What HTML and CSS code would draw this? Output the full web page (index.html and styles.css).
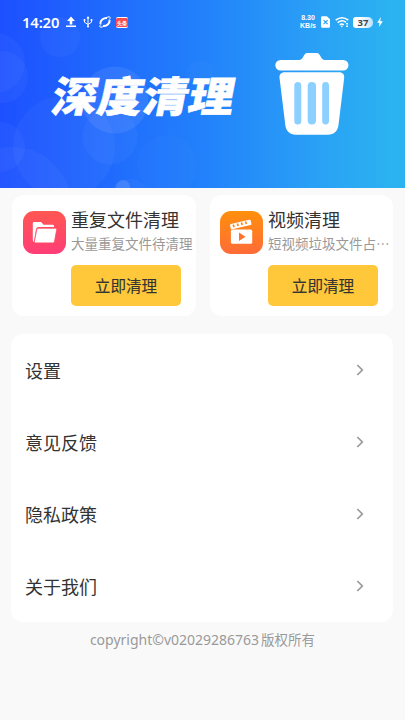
FILE: index.html
```
<!DOCTYPE html>
<html lang="zh-CN">
<head>
<meta charset="utf-8">
<title>深度清理</title>
<link rel="stylesheet" href="styles.css">
</head>
<body>
<header class="hero">
  <svg class="bubbles" viewBox="0 0 405 188" fill="#fff" fill-opacity=".035">
    <circle cx="60" cy="37" r="20"/><circle cx="-5" cy="63" r="30"/><circle cx="2" cy="77" r="26"/>
    <circle cx="0" cy="147" r="25"/><circle cx="64" cy="147" r="51"/><circle cx="12" cy="207" r="60"/>
    <circle cx="115" cy="100" r="33.5" fill-opacity=".08"/><circle cx="110" cy="137" r="27.5"/>
    <circle cx="167" cy="165" r="30" fill-opacity=".015"/><circle cx="200" cy="73" r="13" fill-opacity=".02"/>
    <circle cx="123" cy="187" r="7" fill-opacity=".12"/><circle cx="130" cy="201" r="22"/>
  </svg>
  <div class="status">
    <span class="time">14:20</span>
    <svg class="upload" width="10" height="12" viewBox="0 0 10 12" fill="#fff"><path d="M5 .5 9 5H6.300v3.500H3.700V5H1zM0 9.600h10v1.500H0z"/></svg>
    <svg class="usb" width="10" height="12" viewBox="0 0 10 12" fill="none" stroke="#fff"><path d="M5 1v10M1.500 4v2.200L5 8.500l3.500-2.300V4"/><path d="M5 0 6.500 2.500h-3zM.7 3h1.600v2H.7zM7.700 3h1.600v2H7.700z" fill="#fff" stroke="none"/><circle cx="5" cy="10.500" r="1" fill="#fff" stroke="none"/></svg>
    <svg class="orbit" width="12" height="12" viewBox="0 0 12 12" fill="none" stroke="#fff"><path d="M1.400 7.800C1 4.500 4.500 1.800 8 2M10.600 4.200c.4 3.300-3.100 6-6.600 5.800" stroke-width="2"/><path d="M7.500 1.500c2-.9 3.600-.9 3.700 0 .1.700-.6 1.700-1.600 2.700M4.500 10.500c-2 .9-3.600.9-3.700 0-.1-.7.600-1.700 1.600-2.700" stroke-width="1"/></svg>
    <span class="news">头条</span>
    <span class="speed"><span>8.30</span><span>KB/s</span></span>
    <svg class="sim" width="9" height="12" viewBox="0 0 9 12"><path d="M1.300.3h4.500L9 3.300v7.200a1.200 1.200 0 0 1-1.200 1.200H1.300A1.200 1.200 0 0 1 .1 10.500v-9A1.200 1.200 0 0 1 1.300.3z" fill="#fff"/><path d="m2.600 4.200 4 4m0-4-4 4" stroke="#2b9ff5" stroke-width="1.200"/></svg>
    <svg class="wifi" width="14" height="12" viewBox="0 0 14 12" fill="none" stroke="#fff" stroke-width="1.500"><path d="M.7 4.200q6.300-5 12.600 0M2.700 6.600q4.300-3.400 8.300-.2M4.800 8.900q2.100-1.600 4 0"/><path d="M5.500 9.800h2.600L6.800 11.400zM11.200 7h1.800v1.400h-1.800zM11.200 9.600h1.800V11h-1.800z" fill="#fff" stroke="none"/></svg>
    <span class="battery">37</span>
    <svg class="bolt" width="6" height="10" viewBox="0 0 6 10" fill="#fff"><path d="M3.800 0 .2 5.700h2.300L2 10l3.800-5.800H3.300z"/></svg>
  </div>
  <div class="banner">
    <h1>深度清理</h1>
    <svg class="bin" width="74" height="82" viewBox="0 0 74 82"><path fill="#fff" d="M5.500 7H23c4 0 4.500-2 5.800-4.300C30 .6 30.800 0 32.500 0h9c1.700 0 2.500.6 3.700 2.700C46.500 5 47 7 51 7h17.300a5.200 5.200 0 0 1 0 10.400H5.500A5.200 5.200 0 0 1 5.500 7zM9.500 19.300h54.800c3.300 0 5.200 2.300 4.900 5.500L63.500 72c-.7 6-4.500 9.700-10.500 9.700H20.800c-6 0-9.800-3.700-10.500-9.700L4.500 24.800c-.3-3.200 1.700-5.500 5-5.500z"/><g fill="#8bd0ff"><rect x="19.300" y="29" width="7" height="42.500" rx="3.500"/><rect x="32.700" y="29" width="8.300" height="42.500" rx="4.100"/><rect x="47.200" y="29" width="6.800" height="42.500" rx="3.400"/></g></svg>
  </div>
</header>
<main>
  <section class="cards">
    <article class="card">
      <svg width="43" height="43" viewBox="0 0 43 43"><defs><linearGradient id="red" x2="0" y2="1"><stop stop-color="#ff5752"/><stop offset="1" stop-color="#ff3d77"/></linearGradient></defs><rect width="43" height="43" rx="11" fill="url(#red)"/><path d="M9.800 29V12.200q0-1.300 1.300-1.300h6.200q1 0 1.600.8l1.500 2.100h9.200q1.400 0 1.400 1.400V16H15.500q-2 0-2.400 1.700L11 31q-1.200-.5-1.200-2z" fill="#fff"/><path d="M15.500 17.200h17q1.500 0 1.200 1.400l-2.200 12q-.3 1.300-1.700 1.300H12.200q-1 0-.8-1.300l2.300-12q.3-1.400 1.800-1.400z" fill="#fff" stroke="#ff4b62" stroke-width=".8"/></svg>
      <div class="info"><h2>重复文件清理</h2><p>大量重复文件待清理</p><button>立即清理</button></div>
    </article>
    <article class="card">
      <svg width="43" height="43" viewBox="0 0 43 43"><defs><linearGradient id="orange" x2="0" y2="1"><stop stop-color="#ff900c"/><stop offset="1" stop-color="#ff6b38"/></linearGradient></defs><rect width="43" height="43" rx="11" fill="url(#orange)"/><path d="m11 13 18-4.300q1.500-.3 1.800 1l.6 3.200q.1 1-1 1.200L11 18.500l-.9-3.800Q9.800 13.300 11 13z" fill="#fff"/><path d="m13.200 13.600.9 2.500m3.200-3.600.9 2.500m3.200-3.500.9 2.500m3.200-3.500.9 2.500" stroke="#ff8617" stroke-width="1.700"/><path d="M12.500 18.500h18q1.700 0 1.700 1.700v11q0 1.500-1.700 1.500h-18q-1.600 0-1.600-1.500v-11q0-1.700 1.600-1.700z" fill="#fff"/><path d="m19 21.500 6.500 4.200-6.500 4.200z" fill="#ff742a"/></svg>
      <div class="info"><h2>视频清理</h2><p>短视频垃圾文件占⋯</p><button>立即清理</button></div>
    </article>
  </section>
  <nav class="menu">
    <a><span>设置</span><svg width="8" height="12" viewBox="0 0 8 12"><path d="m1.300 1 5 5-5 5"/></svg></a>
    <a><span>意见反馈</span><svg width="8" height="12" viewBox="0 0 8 12"><path d="m1.300 1 5 5-5 5"/></svg></a>
    <a><span>隐私政策</span><svg width="8" height="12" viewBox="0 0 8 12"><path d="m1.300 1 5 5-5 5"/></svg></a>
    <a><span>关于我们</span><svg width="8" height="12" viewBox="0 0 8 12"><path d="m1.300 1 5 5-5 5"/></svg></a>
  </nav>
</main>
<footer><span class="latin">copyright©v02029286763</span><span>版权所有</span></footer>
</body>
</html>
```
FILE: styles.css
```
* { box-sizing: border-box; margin: 0; }
body { width: 405px; height: 720px; overflow: hidden; background: #f9f9f9; color: #333; font-family: "Noto Sans", "Noto Sans CJK SC", sans-serif; }
.hero { position: relative; height: 188px; overflow: hidden; background: linear-gradient(90deg, #1d50ff, #2281fb 50%, #299ef6 76%, #2bb3f1 97%); color: #fff; }
.bubbles { position: absolute; inset: 0; width: 405px; height: 188px; }
.status { position: relative; display: flex; align-items: center; height: 44px; padding-left: 22px; }
.status svg { flex: none; }
.time { width: 44px; font: 600 14.800px/20px "Noto Sans", sans-serif; letter-spacing: -.15px; }
.usb { margin-left: 7px; }
.orbit { margin-left: 6px; }
.news { width: 12px; height: 11px; margin-left: 5px; border: solid #fff; border-width: 1px 0; border-radius: 2px; background: #fa4c50; font: 700 5px/9px "Noto Sans CJK SC", sans-serif; text-align: center; }
.speed { display: flex; flex-direction: column; width: 20px; margin-left: 170px; font: 700 7px/8px "Liberation Sans", sans-serif; text-align: center; }
.sim { margin-left: 3px; }
.wifi { margin-left: 5px; }
.battery { width: 20px; height: 11px; margin-left: 4px; border-radius: 3px 5px 5px 3px; background: linear-gradient(90deg, #fff 40%, #bce2fd); color: #3d454c; font: 700 9.500px/11px "Noto Sans", sans-serif; text-align: center; }
.bolt { margin-left: 4px; }
.banner { position: relative; display: flex; align-items: flex-start; padding: 9px 0 0 53px; }
h1 { width: 222px; padding-top: 8px; font: 900 45.500px/66px "Noto Sans CJK SC", sans-serif; transform: translateX(1px) skewX(-11deg) scaleY(.92); -webkit-text-stroke: .6px #fff; }
.cards { display: flex; gap: 14px; padding: 7px 12px 0; }
.card { display: flex; width: 184px; height: 121px; padding: 16px 0 0 10.500px; border-radius: 12px; background: #fff; }
.card + .card { padding-left: 9.500px; }
.card > svg { flex: none; margin-right: 5.500px; }
.info { width: 125px; white-space: nowrap; }
h2 { height: 21px; font: 400 18px/16px "Noto Sans CJK SC", sans-serif; }
p { height: 34px; color: #999; font: 400 13.500px/22px "Noto Sans CJK SC", sans-serif; }
button { display: block; width: 110px; height: 41px; margin-top: -1px; padding: 0; border: 0; border-radius: 5px; background: #ffc83b; color: #333; font: 400 15.600px/41px "Noto Sans CJK SC", sans-serif; -webkit-text-stroke: .12px #333; }
.menu { width: 382px; margin: 18px 0 0 11px; border-radius: 12px; background: #fff; }
.menu a { display: flex; align-items: center; justify-content: space-between; height: 72px; padding: 0 29px 0 14px; font: 400 18px/26px "Noto Sans CJK SC", sans-serif; }
.menu path { fill: none; stroke: #999; stroke-width: 1.700; }
footer { display: flex; justify-content: center; gap: 2px; height: 36px; color: #999; font: 400 13.500px/34px "Noto Sans CJK SC", sans-serif; }
.latin { font: 400 14px/36px "Noto Sans", sans-serif; }
```
